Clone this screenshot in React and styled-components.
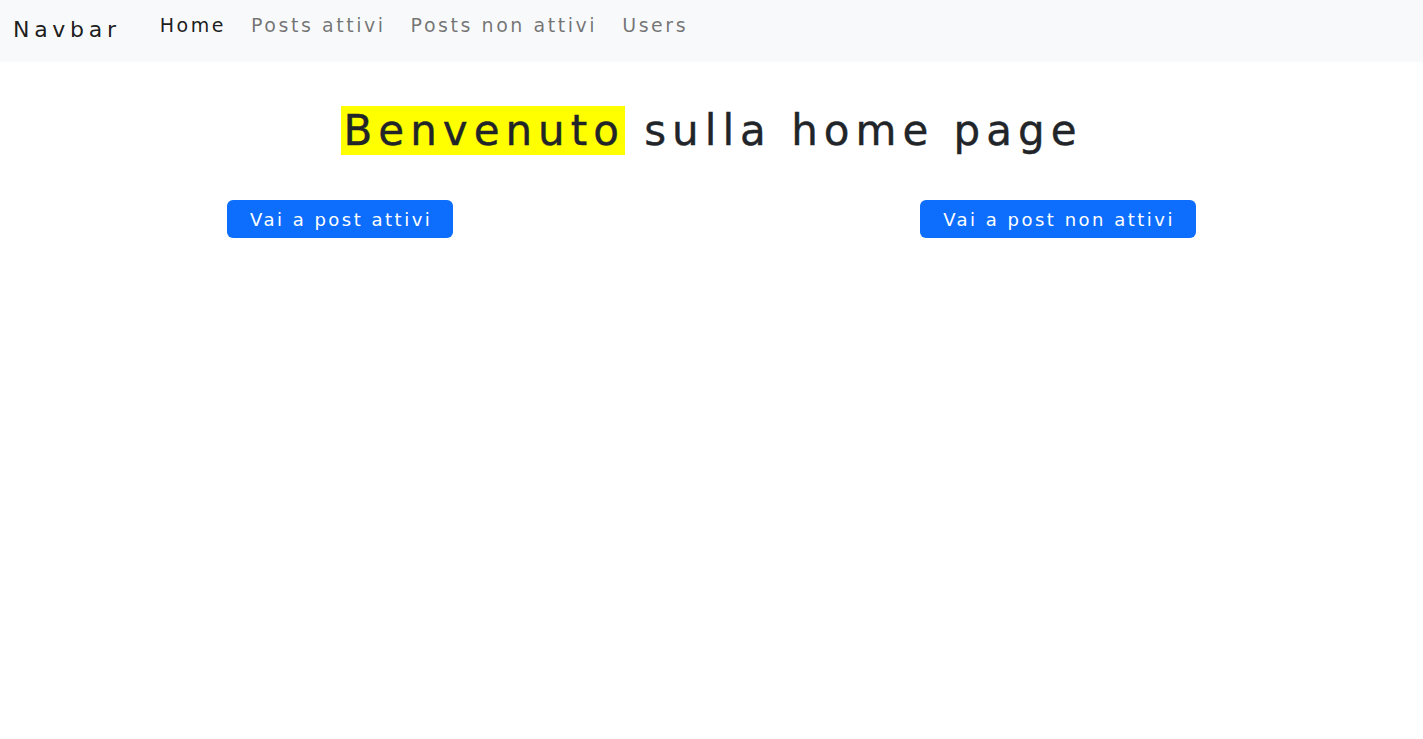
import React from "react";
import styled, { createGlobalStyle } from "styled-components";

const GlobalStyle = createGlobalStyle`
  body {
    margin: 0;
    background: #ffffff;
    font-family: "DejaVu Sans", "Noto Sans", sans-serif;
    color: #212529;
  }
`;

const NavBar = styled.nav`
  height: 62px;
  background: #f8f9fa;
  display: flex;
  align-items: flex-start;
  padding: 0 13px;
`;

const Brand = styled.a`
  font-size: 22px;
  line-height: 26px;
  letter-spacing: 4.7px;
  color: rgba(0, 0, 0, 0.9);
  text-decoration: none;
  margin-top: 17px;
  margin-right: 39px;
`;

const NavList = styled.ul`
  display: flex;
  list-style: none;
  margin: 14px 0 0;
  padding: 0;
  gap: 25px;
`;

const NavLink = styled.a`
  font-size: 19px;
  line-height: 23px;
  letter-spacing: 2.55px;
  text-decoration: none;
  color: ${(p) => (p.$active ? "rgba(0, 0, 0, 0.9)" : "rgba(0, 0, 0, 0.55)")};
`;

const Main = styled.main`
  padding: 0 227px;
`;

const Title = styled.h1`
  margin: 45px 0 0;
  text-align: center;
  font-size: 42px;
  font-weight: 400;
  letter-spacing: 6px;
  line-height: 48px;
  -webkit-text-stroke: 0.4px #212529;
`;

const Mark = styled.mark`
  background: #ffff00;
  color: inherit;
  padding: 0 0 0 3px;
`;

const ButtonRow = styled.div`
  display: flex;
  justify-content: space-between;
  margin-top: 45px;
`;

const Button = styled.button`
  height: 38px;
  padding: 0 21px 0 23px;
  border: none;
  border-radius: 6px;
  background: #0d6efd;
  color: #ffffff;
  font-family: inherit;
  font-size: 18px;
  letter-spacing: 2.5px;
  cursor: pointer;
`;

const links = [
  { label: "Home", active: true },
  { label: "Posts attivi" },
  { label: "Posts non attivi" },
  { label: "Users" },
];

export default function App() {
  return (
    <>
      <GlobalStyle />
      <NavBar>
        <Brand href="#">Navbar</Brand>
        <NavList>
          {links.map((l) => (
            <li key={l.label}>
              <NavLink href="#" $active={l.active}>
                {l.label}
              </NavLink>
            </li>
          ))}
        </NavList>
      </NavBar>
      <Main>
        <Title>
          <Mark>Benvenuto</Mark> sulla home page
        </Title>
        <ButtonRow>
          <Button>Vai a post attivi</Button>
          <Button>Vai a post non attivi</Button>
        </ButtonRow>
      </Main>
    </>
  );
}
